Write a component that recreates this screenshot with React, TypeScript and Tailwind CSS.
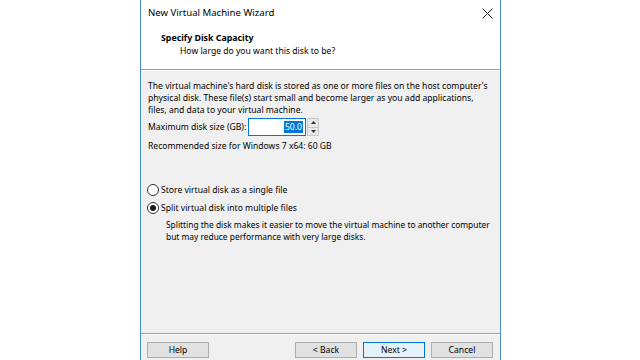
import React from "react";

function Radio({ checked }: { checked?: boolean }) {
  return (
    <span className="w-[12px] h-[12px] rounded-full border border-[#333333] bg-white flex items-center justify-center shrink-0">
      {checked && <span className="w-[6px] h-[6px] rounded-full bg-[#1a1a1a]" />}
    </span>
  );
}

function Btn({ label, primary }: { label: string; primary?: boolean }) {
  return (
    <div
      className={
        "w-[62px] h-[16px] flex items-center justify-center border text-[8.6px] leading-[12px] text-black " +
        (primary ? "border-[#0078d7] bg-[#e5f1fb]" : "border-[#adadad] bg-[#e1e1e1]")
      }
    >
      {label}
    </div>
  );
}

export default function App() {
  return (
    <div
      className="w-[640px] h-[360px] bg-white pl-[140px] overflow-hidden text-black"
      style={{ fontFamily: '"Noto Sans", "Open Sans", sans-serif' }}
    >
      <div className="w-[361px] h-[360px] border-x border-[#4a8fd6] flex flex-col">
        {/* title bar */}
        <div className="h-[26px] bg-white flex items-center justify-between pl-[7px] pr-[6px]">
          <span className="text-[9.6px] leading-[12px] whitespace-nowrap">New Virtual Machine Wizard</span>
          <svg width="11" height="11" viewBox="0 0 11 11" className="mr-[1px]">
            <path d="M0.5 0.5 L10.5 10.5 M10.5 0.5 L0.5 10.5" stroke="#222" strokeWidth="1" fill="none" />
          </svg>
        </div>
        {/* header */}
        <div className="h-[43px] bg-white flex flex-col pl-[20px] pt-[6px] whitespace-nowrap">
          <span className="text-[8.8px] leading-[12px] font-bold">Specify Disk Capacity</span>
          <span className="text-[8.6px] leading-[12px] pl-[19px] mt-[1px]">How large do you want this disk to be?</span>
        </div>
        <div className="h-px bg-[#a0a0a0]" />
        <div className="h-px bg-white" />
        {/* body */}
        <div className="flex-1 bg-[#f0f0f0] flex flex-col pl-[7px] pt-[9px] text-[8.6px] leading-[12px] whitespace-nowrap">
          <p>
            The virtual machine's hard disk is stored as one or more files on the host computer's
            <br />
            physical disk. These file(s) start small and become larger as you add applications,
            <br />
            files, and data to your virtual machine.
          </p>
          <div className="flex items-center mt-[2px] h-[18px]">
            <span className="w-[100px]">Maximum disk size (GB):</span>
            <div className="w-[58px] h-[18px] border border-[#0078d7] bg-white flex items-center justify-end pr-[2px]">
              <span className="bg-[#0078d7] text-white px-[1px]">50.0</span>
            </div>
            <div className="w-[12px] h-[18px] ml-[1px] flex flex-col border border-[#c8c8c8] bg-[#e8e8e8]">
              <div className="flex-1 flex items-center justify-center border-b border-[#c8c8c8]">
                <svg width="5" height="3" viewBox="0 0 5 3">
                  <path d="M0 3 L2.5 0 L5 3 Z" fill="#333" />
                </svg>
              </div>
              <div className="flex-1 flex items-center justify-center">
                <svg width="5" height="3" viewBox="0 0 5 3">
                  <path d="M0 0 L2.5 3 L5 0 Z" fill="#333" />
                </svg>
              </div>
            </div>
          </div>
          <p className="mt-[4px]">Recommended size for Windows 7 x64: 60 GB</p>
          <div className="flex items-center gap-[2px] mt-[32px] h-[12px] -ml-[1px]">
            <Radio />
            <span>Store virtual disk as a single file</span>
          </div>
          <div className="flex items-center gap-[2px] mt-[6px] h-[12px] -ml-[1px]">
            <Radio checked />
            <span>Split virtual disk into multiple files</span>
          </div>
          <p className="pl-[18px] mt-[5px] text-[8.4px]">
            Splitting the disk makes it easier to move the virtual machine to another computer
            <br />
            but may reduce performance with very large disks.
          </p>
        </div>
        <div className="h-px bg-[#a0a0a0]" />
        <div className="h-px bg-white" />
        {/* footer */}
        <div className="h-[25px] bg-[#f0f0f0] flex items-start pt-[7px] pl-[6px] pr-[7px]">
          <Btn label="Help" />
          <div className="flex-1" />
          <div className="flex gap-[6px]">
            <Btn label="< Back" />
            <Btn label="Next >" primary />
            <Btn label="Cancel" />
          </div>
        </div>
      </div>
    </div>
  );
}
